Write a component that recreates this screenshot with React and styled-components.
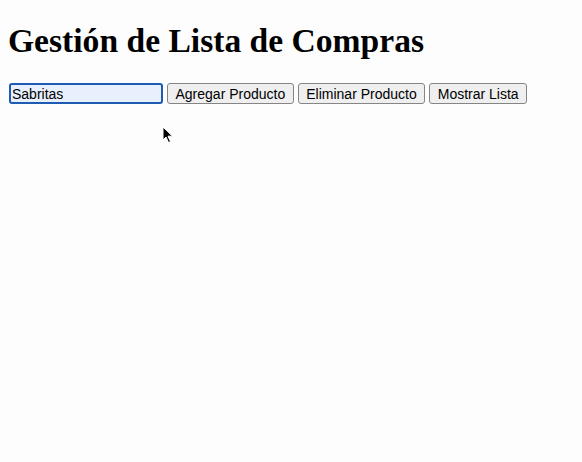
import React, { useState } from "react";
import styled, { createGlobalStyle } from "styled-components";

const GlobalStyle = createGlobalStyle`
    body {
        margin: 0;
        background: #fdfdfd;
        font-family: "Liberation Serif", serif;
        color: #000;
    }
`;

const Page = styled.div`
    position: relative;
    padding: 8px;
    min-height: 446px;
`;

const Title = styled.h1`
    font-family: "Liberation Serif", "Times New Roman", serif;
    font-size: 33.6px;
    font-weight: bold;
    margin: 14px 0 23px 0;
`;

const Controls = styled.div`
    display: flex;
    align-items: flex-start;
    gap: 4px;
`;

const TextInput = styled.input`
    box-sizing: border-box;
    width: 154px;
    height: 21px;
    margin: 0 0 0 1px;
    padding: 1px 1px;
    font-family: "Liberation Sans", Arial, sans-serif;
    font-size: 14px;
    color: #000;
    background: #e8f0fe;
    border: 2px solid #1f5bb3;
    border-radius: 3px;
    outline: none;
`;

const Button = styled.button`
    box-sizing: border-box;
    height: 21px;
    padding: 0 7.5px;
    font-family: "Liberation Sans", Arial, sans-serif;
    font-size: 14px;
    color: #000;
    background: #efefef;
    border: 1px solid #858585;
    border-radius: 3px;
    cursor: default;
`;

const Pointer = styled.svg`
    position: absolute;
    left: 162px;
    top: 126px;
`;

const App = () => {
    const [producto, setProducto] = useState("Sabritas");
    return (
        <>
            <GlobalStyle />
            <Page>
                <Title>Gestión de Lista de Compras</Title>
                <Controls>
                    <TextInput autoFocus value={producto} onChange={(e) => setProducto(e.target.value)} />
                    <Button>Agregar Producto</Button>
                    <Button>Eliminar Producto</Button>
                    <Button>Mostrar Lista</Button>
                </Controls>
                <Pointer width="12" height="18" viewBox="0 0 12 18">
                    <path d="M1 1 L1 14 L4 11 L6.5 16.5 L8.5 15.6 L6 10.2 L10.5 10.2 Z" fill="#000" stroke="#fff" strokeWidth="1" />
                </Pointer>
            </Page>
        </>
    );
};

export default App;
